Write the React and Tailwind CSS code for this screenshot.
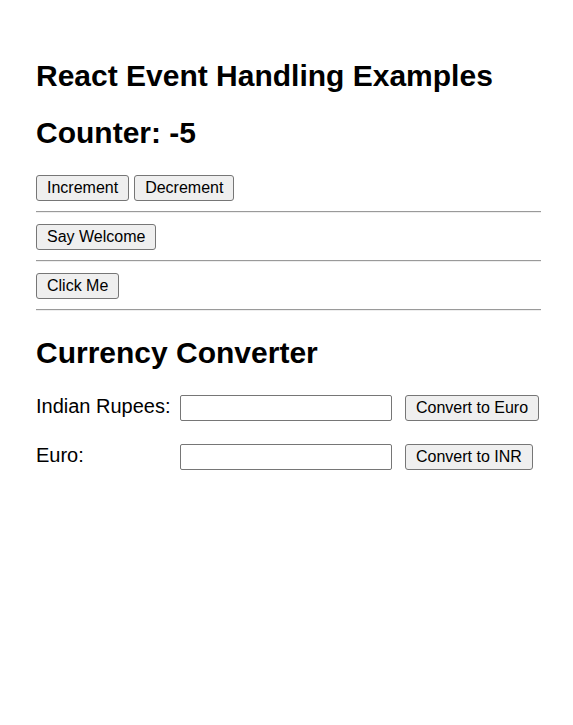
import React, { useState } from "react";

const btn =
  "border border-[#767676] bg-[#efefef] rounded-[3px] px-[10px] py-[3px] h-[26px] text-[16px] leading-[18px] text-black";

const hr = "h-0 border-0 border-t border-b border-t-[#9a9a9a] border-b-[#eeeeee]";

export default function App() {
  const [count, setCount] = useState(-5);
  const [inr, setInr] = useState("");
  const [eur, setEur] = useState("");

  return (
    <div className="min-h-[725px] bg-white text-black font-['Liberation_Sans',Arial,sans-serif] px-[36px] pt-[58px]">
      <div className="w-[505px]">
        <h1 className="text-[30px] leading-[36px] font-bold">React Event Handling Examples</h1>
        <h2 className="mt-[21px] text-[30px] leading-[36px] font-bold">Counter: {count}</h2>

        <div className="mt-[24px] flex gap-[5px]">
          <button className={btn} onClick={() => setCount(count + 1)}>Increment</button>
          <button className={btn} onClick={() => setCount(count - 1)}>Decrement</button>
        </div>
        <hr className={"mt-[10px] mb-[11px] " + hr} />
        <div className="flex">
          <button className={btn}>Say Welcome</button>
        </div>
        <hr className={"mt-[10px] mb-[11px] " + hr} />
        <div className="flex">
          <button className={btn}>Click Me</button>
        </div>
        <hr className={"mt-[10px] " + hr} />

        <h2 className="mt-[24px] text-[30px] leading-[36px] font-bold">Currency Converter</h2>

        <div className="mt-[24px] flex items-start">
          <label className="w-[144px] text-[20px] leading-[22px]">Indian Rupees:</label>
          <input
            className="w-[212px] h-[26px] border border-[#767676] rounded-[2px] bg-white px-[2px] text-[16px]"
            value={inr}
            onChange={(e) => setInr(e.target.value)}
          />
          <button className={btn + " ml-[13px]"}>Convert to Euro</button>
        </div>

        <div className="mt-[23px] flex items-start">
          <label className="w-[144px] text-[20px] leading-[22px]">Euro:</label>
          <input
            className="w-[212px] h-[26px] border border-[#767676] rounded-[2px] bg-white px-[2px] text-[16px]"
            value={eur}
            onChange={(e) => setEur(e.target.value)}
          />
          <button className={btn + " ml-[13px]"}>Convert to INR</button>
        </div>
      </div>
    </div>
  );
}
